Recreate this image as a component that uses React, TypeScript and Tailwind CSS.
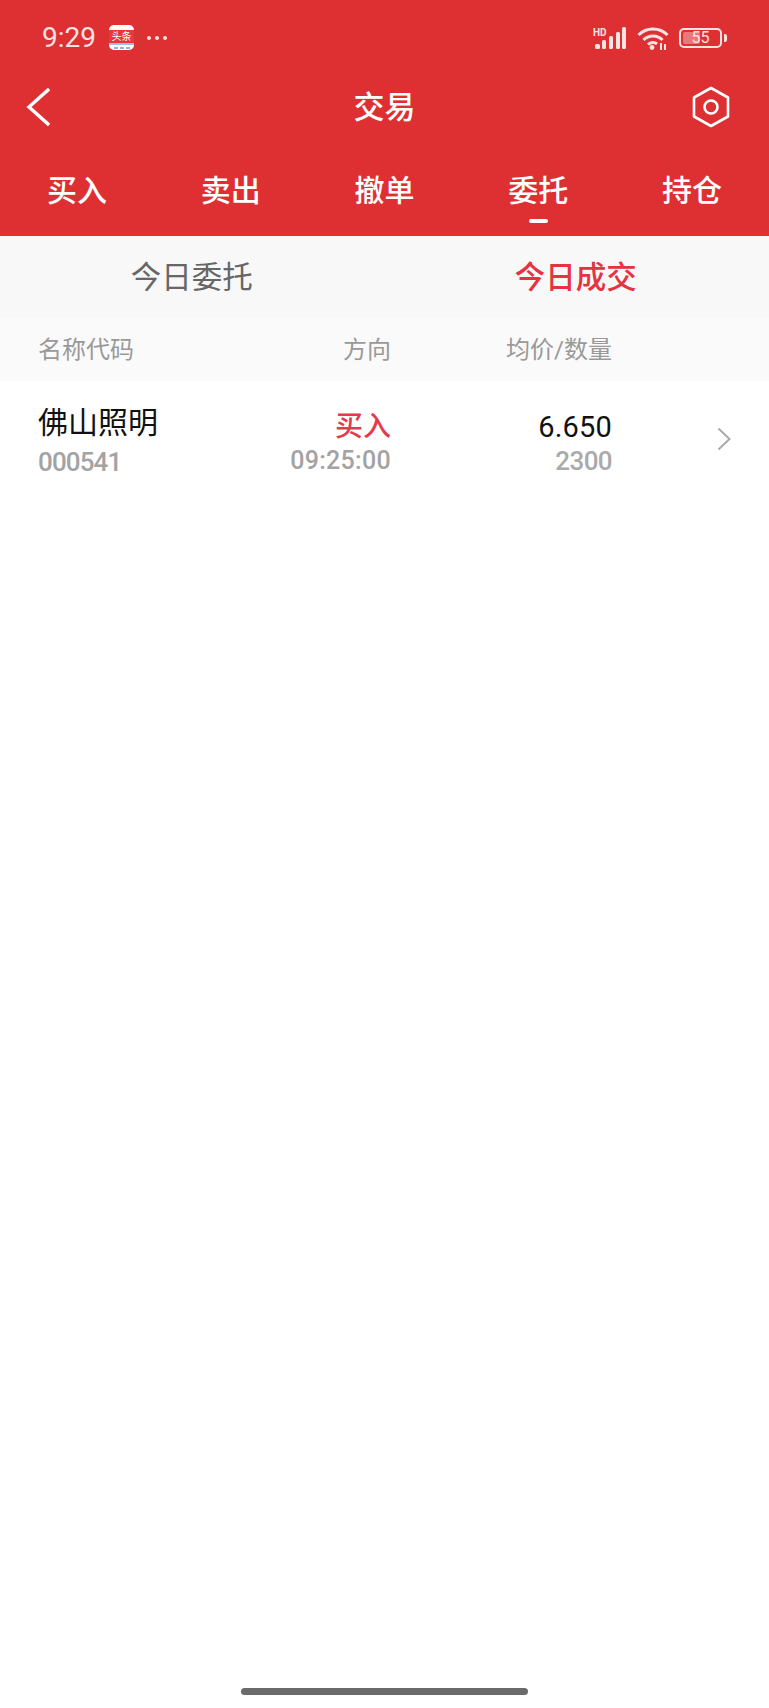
const cjk = "font-['Roboto','Noto_Sans_CJK_SC',sans-serif]";

const navTabs = ["买入", "卖出", "撤单", "委托", "持仓"];

const AppBadge = (): JSX.Element => (
  <div className="w-[25px] h-[25px] rounded-[5px] bg-white overflow-hidden flex flex-col">
    <div className="h-[5px]" />
    <div className="h-[13px] bg-[#e8383a] text-white text-[10px] leading-[13px] text-center whitespace-nowrap">
      头条
    </div>
    <div className="h-[2px] bg-[#9fc0e6]" />
    <div className="flex-1 flex justify-center items-center gap-[2px]">
      <span className="w-[4px] h-[2px] bg-[#8fb4dd]" />
      <span className="w-[4px] h-[2px] bg-[#8fb4dd]" />
      <span className="w-[4px] h-[2px] bg-[#8fb4dd]" />
    </div>
  </div>
);

const Signal = (): JSX.Element => (
  <svg width="34" height="22" viewBox="0 0 34 22" fill="#f9e3e3">
    <text x="0" y="9" fontSize="10" fontWeight="700" fontFamily="Roboto, sans-serif">
      HD
    </text>
    <rect x="2" y="17" width="5" height="5" rx="1.5" />
    <rect x="9" y="13" width="4" height="9" rx="1.5" />
    <rect x="16" y="9" width="4" height="13" rx="1.5" />
    <rect x="23" y="5" width="4" height="17" rx="1.5" />
    <rect x="29" y="0" width="4" height="22" rx="1.5" />
  </svg>
);

const Wifi = (): JSX.Element => (
  <svg width="32" height="24" viewBox="0 0 32 24" fill="none" stroke="#f9e3e3" strokeWidth="3">
    <path d="M1.5 9 C9.5 1 22.5 1 30.5 9" />
    <path d="M6.5 14 C11.5 8.5 20.5 8.5 25.5 14" />
    <path d="M11 18.5 C13.5 15.8 17.5 15.8 20 18" />
    <circle cx="15" cy="21.5" r="2.4" fill="#f9e3e3" stroke="none" />
    <path d="M24 17 V24 M28 18 V24" strokeWidth="2" />
  </svg>
);

const Battery = (): JSX.Element => (
  <div className="flex items-center gap-[2px]">
    <div className="relative w-[43px] h-[20px] rounded-[5px] border-2 border-[#f9e3e3] overflow-hidden flex items-center justify-center">
      <div className="absolute left-[2px] top-[2px] bottom-[2px] w-[17px] rounded-[2px] bg-[#e9787a]" />
      <span className="relative text-[#f9e3e3] text-[16px] leading-none">55</span>
    </div>
    <div className="w-[3px] h-[8px] rounded-r-[2px] bg-[#f9e3e3]" />
  </div>
);

export default function App(): JSX.Element {
  return (
    <div className={`${cjk} min-h-[1708px] bg-white flex flex-col`}>
      <div className="h-[236px] bg-[#de3032] text-white shrink-0 flex flex-col">
        <div className="h-[74px] flex items-center justify-between px-[42px] pt-[1px]">
          <div className="flex items-center">
            <span className="text-[28px] leading-none text-[#f9e3e3]">9:29</span>
            <div className="ml-[13px]">
              <AppBadge />
            </div>
            <div className="ml-[13px] flex gap-[4px]">
              <span className="w-[4px] h-[4px] rounded-full bg-[#f9e3e3]" />
              <span className="w-[4px] h-[4px] rounded-full bg-[#f9e3e3]" />
              <span className="w-[4px] h-[4px] rounded-full bg-[#f9e3e3]" />
            </div>
          </div>
          <div className="flex items-center gap-[10px]">
            <Signal />
            <Wifi />
            <Battery />
          </div>
        </div>

        <div className="h-[66px] grid grid-cols-3 items-center px-[39px]">
          <svg className="-ml-[13px]" width="24" height="40" viewBox="0 0 24 40" fill="none" stroke="white" strokeWidth="3.4">
            <path d="M23 2 L3 20 L23 38" />
          </svg>
          <span className="text-[31px] leading-none text-center font-medium">交易</span>
          <svg className="justify-self-end" width="38" height="42" viewBox="0 0 38 42" fill="none" stroke="white" strokeWidth="2.6" strokeLinejoin="round">
            <path d="M19 2 L36 11.5 V30.5 L19 40 L2 30.5 V11.5 Z" />
            <circle cx="19" cy="21" r="6.5" />
          </svg>
        </div>

        <div className="grid grid-cols-5 flex-1">
          {navTabs.map((tab) => (
            <div key={tab} className="relative flex justify-center pt-[33px]">
              <span className="text-[30px] leading-[36px] font-medium">{tab}</span>
              {tab === "委托" && (
                <div className="absolute top-[79px] w-[19px] h-[4px] rounded-full bg-white" />
              )}
            </div>
          ))}
        </div>
      </div>

      <div className="h-[82px] bg-[#f8f8f8] grid grid-cols-2 items-center shrink-0 pt-[2px]">
        <div className="text-center text-[30.5px] leading-none text-[#666666] pr-[1px]">今日委托</div>
        <div className="text-center text-[30.5px] leading-none text-[#e5333f] font-medium pr-[2px]">今日成交</div>
      </div>

      <div className="h-[63px] bg-[#fafafa] flex items-center pl-[38px] text-[24px] leading-none text-[#999999] shrink-0">
        <div className="w-[353px] flex justify-between">
          <span>名称代码</span>
          <span>方向</span>
        </div>
        <div className="w-[221px] text-right">均价/数量</div>
      </div>

      <div className="h-[116px] flex pl-[38px] shrink-0">
        <div className="w-[353px] flex justify-between">
          <div className="flex flex-col pt-[23px]">
            <span className="text-[30px] leading-[38px] text-[#111111]">佛山照明</span>
            <span className="text-[26px] leading-[30px] mt-[5px] text-[#a3a3a3] font-medium tracking-[-0.9px]">000541</span>
          </div>
          <div className="flex flex-col items-end pt-[28px]">
            <span className="text-[28px] leading-[36px] text-[#e5394d] font-medium">买入</span>
            <span className="text-[25px] leading-[30px] mt-[1px] text-[#a3a3a3] font-medium tracking-[0.3px]">09:25:00</span>
          </div>
        </div>
        <div className="w-[221px] flex flex-col items-end pt-[28px]">
          <span className="text-[29px] leading-[36px] text-[#111111] tracking-[0.2px]">6.650</span>
          <span className="text-[26px] leading-[30px] mt-[1px] text-[#aaaaaa] font-medium tracking-[-0.6px]">2300</span>
        </div>
        <div className="flex-1 flex justify-end pr-[38px] pt-[46px]">
          <svg width="14" height="24" viewBox="0 0 14 24" fill="none" stroke="#aaaaaa" strokeWidth="2">
            <path d="M1.5 1.5 L12.5 12 L1.5 22.5" />
          </svg>
        </div>
      </div>

      <div className="mt-auto flex justify-center pb-[13px]">
        <div className="w-[287px] h-[7px] rounded-full bg-[#6b6b6b]" />
      </div>
    </div>
  );
}
